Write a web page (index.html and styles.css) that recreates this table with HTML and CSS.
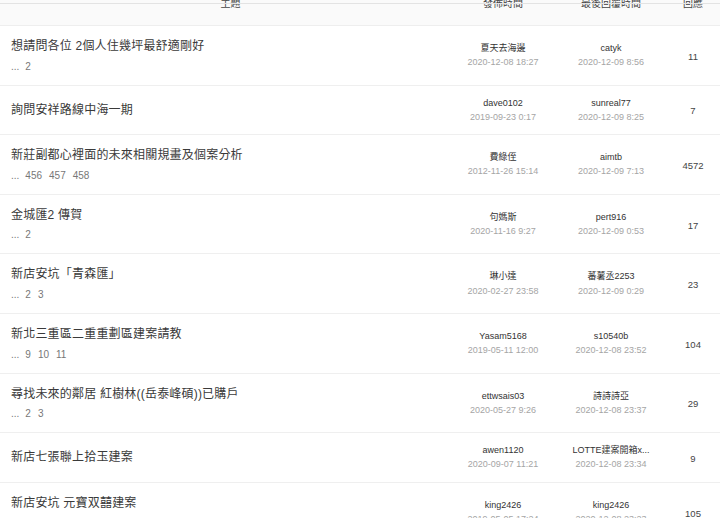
FILE: index.html
```html
<!DOCTYPE html>
<html lang="zh-Hant">
<head>
<meta charset="utf-8">
<title>討論區</title>
<link rel="stylesheet" href="styles.css">
</head>
<body>
<div class="topline"></div>
<div class="board">
  <div class="row head">
    <div class="cell-title head-title">主題</div>
    <div class="cell">發佈時間</div>
    <div class="cell">最後回覆時間</div>
    <div class="cell">回應</div>
  </div>

  <div class="row">
    <div class="cell-title"><div class="topic">想請問各位 2個人住幾坪最舒適剛好</div><div class="pages"><span class="dots">...</span><span class="pg">2</span></div></div>
    <div class="cell"><div class="name">夏天去海邊</div><div class="date">2020-12-08 18:27</div></div>
    <div class="cell"><div class="name">catyk</div><div class="date">2020-12-09 8:56</div></div>
    <div class="cell count">11</div>
  </div>

  <div class="row">
    <div class="cell-title"><div class="topic">詢問安祥路線中海一期</div></div>
    <div class="cell"><div class="name">dave0102</div><div class="date">2019-09-23 0:17</div></div>
    <div class="cell"><div class="name">sunreal77</div><div class="date">2020-12-09 8:25</div></div>
    <div class="cell count">7</div>
  </div>

  <div class="row">
    <div class="cell-title"><div class="topic">新莊副都心裡面的未來相關規畫及個案分析</div><div class="pages"><span class="dots">...</span><span class="pg">456</span><span class="pg">457</span><span class="pg">458</span></div></div>
    <div class="cell"><div class="name">費綠侄</div><div class="date">2012-11-26 15:14</div></div>
    <div class="cell"><div class="name">aimtb</div><div class="date">2020-12-09 7:13</div></div>
    <div class="cell count">4572</div>
  </div>

  <div class="row">
    <div class="cell-title"><div class="topic">金城匯2 傳賀</div><div class="pages"><span class="dots">...</span><span class="pg">2</span></div></div>
    <div class="cell"><div class="name">句媽斯</div><div class="date">2020-11-16 9:27</div></div>
    <div class="cell"><div class="name">pert916</div><div class="date">2020-12-09 0:53</div></div>
    <div class="cell count">17</div>
  </div>

  <div class="row">
    <div class="cell-title"><div class="topic">新店安坑「青森匯」</div><div class="pages"><span class="dots">...</span><span class="pg">2</span><span class="pg">3</span></div></div>
    <div class="cell"><div class="name">琳小達</div><div class="date">2020-02-27 23:58</div></div>
    <div class="cell"><div class="name">蕃薯丞2253</div><div class="date">2020-12-09 0:29</div></div>
    <div class="cell count">23</div>
  </div>

  <div class="row">
    <div class="cell-title"><div class="topic">新北三重區二重重劃區建案請教</div><div class="pages"><span class="dots">...</span><span class="pg">9</span><span class="pg">10</span><span class="pg">11</span></div></div>
    <div class="cell"><div class="name">Yasam5168</div><div class="date">2019-05-11 12:00</div></div>
    <div class="cell"><div class="name">s10540b</div><div class="date">2020-12-08 23:52</div></div>
    <div class="cell count">104</div>
  </div>

  <div class="row">
    <div class="cell-title"><div class="topic">尋找未來的鄰居 紅樹林((岳泰峰碩))已購戶</div><div class="pages"><span class="dots">...</span><span class="pg">2</span><span class="pg">3</span></div></div>
    <div class="cell"><div class="name">ettwsais03</div><div class="date">2020-05-27 9:26</div></div>
    <div class="cell"><div class="name">詩詩詩亞</div><div class="date">2020-12-08 23:37</div></div>
    <div class="cell count">29</div>
  </div>

  <div class="row">
    <div class="cell-title"><div class="topic">新店七張聯上拾玉建案</div></div>
    <div class="cell"><div class="name">awen1120</div><div class="date">2020-09-07 11:21</div></div>
    <div class="cell"><div class="name">LOTTE建案開箱x...</div><div class="date">2020-12-08 23:34</div></div>
    <div class="cell count">9</div>
  </div>

  <div class="row">
    <div class="cell-title"><div class="topic">新店安坑 元寶双囍建案</div><div class="pages"><span class="dots">...</span><span class="pg">2</span></div></div>
    <div class="cell"><div class="name">king2426</div><div class="date">2019-05-05 17:24</div></div>
    <div class="cell"><div class="name">king2426</div><div class="date">2020-12-08 23:23</div></div>
    <div class="cell count">105</div>
  </div>
</div>
</body>
</html>
```

FILE: styles.css
```css
html, body {
  margin: 0;
  padding: 0;
  background: #ffffff;
}

body {
  font-family: "Liberation Sans", "Noto Sans CJK TC", sans-serif;
  color: #333333;
  overflow: hidden;
}

.topline {
  position: fixed;
  top: 3px;
  left: 0;
  right: 0;
  height: 1px;
  background: #e3e3e3;
}

.board {
  margin-top: -19px;
  width: 720px;
}

.row {
  display: grid;
  grid-template-columns: 450px 106px 110px 54px;
  align-items: center;
  border-bottom: 1px solid #efefef;
  padding: 10px 0;
}

.row.head {
  background: #fafafa;
  padding: 16px 0 14px;
  font-size: 10px;
  line-height: 14px;
  color: #444444;
  border-bottom: 1px solid #eeeeee;
}

.head-title {
  text-align: center;
}

.cell-title {
  padding-left: 11px;
}

.cell {
  text-align: center;
}

.topic {
  font-size: 12px;
  letter-spacing: 0.2px;
  line-height: 20px;
  color: #3a3a3a;
}

.pages {
  margin-top: 2.6px;
  font-size: 10px;
  line-height: 16px;
  color: #777777;
  display: flex;
  gap: 7px;
}

.dots {
  margin-right: -1px;
}

.name {
  font-size: 9px;
  line-height: 14.3px;
  color: #333333;
}

.date {
  font-size: 9px;
  line-height: 14.3px;
  color: #a5a5a5;
}

.count {
  font-size: 9.5px;
  color: #444444;
  padding-top: 2px;
}
```
